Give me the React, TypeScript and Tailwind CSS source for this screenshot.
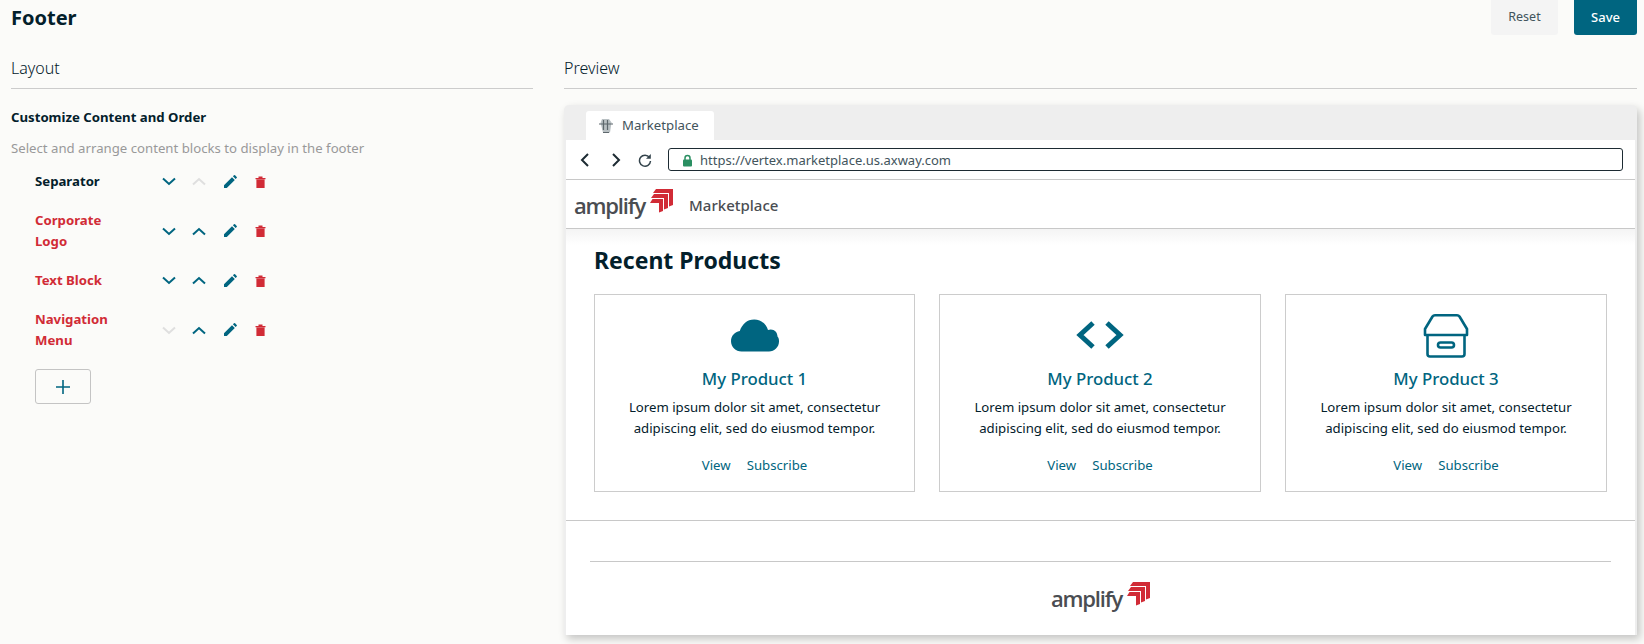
import React from "react";

const Chevron = ({ up, muted }: { up?: boolean; muted?: boolean }) => (
  <svg width="14" height="9" viewBox="0 0 14 9" className={muted ? "text-[#dfdfdf]" : "text-[#006580]"}>
    <path d={up ? "M1 7.5 7 2l6 5.5" : "M1 1.5 7 7l6-5.5"} fill="none" stroke="currentColor" strokeWidth="2" />
  </svg>
);

const Pencil = () => (
  <svg width="14" height="14" viewBox="0 0 14 14" className="text-[#006580]">
    <path d="M1 10.2 9 2.2l2.8 2.8-8 8H1zM9.9 1.3 11 .3a.8.8 0 0 1 1.1 0l1.6 1.6a.8.8 0 0 1 0 1.1l-1.1 1.1z" fill="currentColor" />
  </svg>
);

const Trash = () => (
  <svg width="11" height="12" viewBox="0 0 11 12" className="text-[#d12b36]">
    <path d="M0.5 2h10v1.2H.5zM3.5.4h4V2h-4zM1.4 3.6h8.2V12H1.4z" fill="currentColor" />
  </svg>
);

const Arrows = () => (
  <svg width="23" height="24" viewBox="0 0 23 24" className="shrink-0">
    <path fill="#d12b36" d="M6 0h17v16l-4 1.500V4H3z" />
    <path fill="#d12b36" d="M4 5h14v14l-4 1.500V9H1z" />
    <path fill="#d12b36" d="M2.500 10H13v12l-4 1.500V14H0z" />
  </svg>
);

const Logo = () => (
  <div className="flex items-start gap-[5px]">
    <span className="mt-[1px] text-[22px] leading-[30px] font-semibold tracking-[-1.2px] text-[#4a4d52] [font-family:'Open_Sans',sans-serif]">
      amplify
    </span>
    <Arrows />
  </div>
);

const Row = ({ name, error, first, last }: { name: string; error?: boolean; first?: boolean; last?: boolean }) => (
  <div className="flex items-center">
    <div className={`w-[92px] text-[13.2px] leading-[21px] font-bold ${error ? "text-[#d12b36]" : "text-[#03202b]"}`}>{name}</div>
    <div className="ml-[27px] flex items-center">
      <div className="flex w-[30px] justify-center"><Chevron muted={last} /></div>
      <div className="flex w-[30px] justify-center"><Chevron up muted={first} /></div>
      <div className="flex w-[31px] justify-center"><Pencil /></div>
      <div className="flex w-[30px] justify-center"><Trash /></div>
    </div>
  </div>
);

const Card = ({ icon, title, width }: { icon: React.ReactNode; title: string; width: string }) => (
  <div className={`flex h-[198px] flex-col items-center border border-[#cccccc] bg-white ${width}`}>
    <div className="mt-[17px] flex h-[46px] items-center justify-center">{icon}</div>
    <div className="mt-[8px] text-[16.8px] leading-[26px] font-medium text-[#006580]">{title}</div>
    <div className="mt-[5px] text-center text-[13.2px] leading-[21px] text-[#03202b]">
      Lorem ipsum dolor sit amet, consectetur
      <br />
      adipiscing elit, sed do eiusmod tempor.
    </div>
    <div className="mt-[16px] flex gap-4 text-[13.2px] leading-[21px] text-[#006580]">
      <span>View</span>
      <span>Subscribe</span>
    </div>
  </div>
);

const Cloud = () => (
  <svg width="48" height="33" viewBox="0 0 48 32" className="text-[#006580]">
    <path fill="currentColor" d="M10.500 32C4.700 32 0 27.600 0 21.800 0 16.600 3.700 12.300 8.800 11.600 11 4.700 16 0 23.200 0c6.600 0 12 4.400 13.800 10.600.9-.4 1.700-.6 2.700-.6 4.200 0 6.700 3.200 6.800 7 1.500 1.600 1.500 3.200 1.500 5 0 5.500-4.500 10-10 10z" />
  </svg>
);

const Code = () => (
  <svg width="48" height="30" viewBox="0 0 48 28" className="text-[#006580]">
    <path fill="none" stroke="currentColor" strokeWidth="5" d="M17 2 4 14l13 12M31 2l13 12-13 12" />
  </svg>
);

const Box = () => (
  <svg width="46" height="45" viewBox="0 0 46 45" className="text-[#006580]">
    <g fill="none" stroke="currentColor" strokeWidth="2.600" strokeLinejoin="round">
      <path d="M2 16 9.500 3.500a3 3 0 0 1 2.500-1.300h22a3 3 0 0 1 2.500 1.300L44 16v6H2z" />
      <path d="M4.500 22v19a2.500 2.500 0 0 0 2.500 2.500h32a2.500 2.500 0 0 0 2.500-2.500V22" />
      <rect x="15" y="29.500" width="16" height="5" rx="2.500" />
    </g>
  </svg>
);

export default function App() {
  return (
    <div className="h-[644px] overflow-hidden bg-[#fbfbf9] pr-[7px] pl-[11px] [font-family:'Noto_Sans',sans-serif]">
      <div className="flex h-[35px] items-center justify-between">
        <h1 className="text-xl leading-[35px] font-bold text-[#03202b]">Footer</h1>
        <div className="flex h-[35px] gap-4 self-start">
          <button className="w-[67px] rounded-b-[3px] bg-[#f4f4f4] text-[12.5px] text-[#42545c]">Reset</button>
          <button className="w-[63px] rounded-b-[3px] bg-[#006580] text-[13px] font-medium text-white">Save</button>
        </div>
      </div>
      <div className="mt-[21px] flex gap-[31px]">
        <div className="w-[522px] shrink-0">
          <div className="h-[33px] border-b border-[#cccccc] text-base leading-[24px] font-light text-[#03202b]">Layout</div>
          <div className="mt-[18px] text-[13.2px] leading-[20px] font-bold text-[#03202b]">Customize Content and Order</div>
          <div className="mt-[11px] text-[13.2px] leading-[20px] text-[#999999]">Select and arrange content blocks to display in the footer</div>
          <div className="mt-[13px] flex flex-col gap-[18px] pl-[24px]">
            <Row name="Separator" first />
            <Row name="Corporate Logo" error />
            <Row name="Text Block" error />
            <Row name="Navigation Menu" error last />
            <button className="flex h-[35px] w-[56px] items-center justify-center rounded-[3px] border border-[#c4c4c4]">
              <svg width="16" height="16" viewBox="0 0 16 16" className="text-[#006580]">
                <path d="M8 1v14M1 8h14" stroke="currentColor" strokeWidth="1.600" fill="none" />
              </svg>
            </button>
          </div>
        </div>
        <div className="min-w-0 flex-1">
          <div className="h-[33px] border-b border-[#cccccc] text-base leading-[24px] font-light text-[#03202b]">Preview</div>
          <div className="mt-[16px] h-[530px] rounded-t-[5px] bg-[#eeeeee] px-[2px] shadow-[3px_4px_8px_rgba(0,0,0,0.22)]">
            <div className="flex h-[35px] items-end pl-[20px]">
              <div className="flex h-[29px] w-[128px] items-center gap-[8px] rounded-t-[3px] bg-white pt-[1px] pl-[12px] text-[13.2px] text-[#42545c]">
                <svg width="16" height="18" viewBox="0 0 16 18">
                  <path d="M4 2h7l2.500 3.500-1.500 10H5L2.500 6z" fill="#b9c0c3" />
                  <path d="M5.500 3v10M9.500 3v10M1 7h14M5 15.500h6" stroke="#5d676c" strokeWidth="1.200" fill="none" />
                </svg>
                <span>Marketplace</span>
              </div>
            </div>
            <div className="h-[495px] bg-white">
              <div className="flex h-[40px] items-center border-b border-[#c8c8c8] pl-[13px]">
                <svg width="12" height="16" viewBox="0 0 12 16" className="text-[#1d2b33]">
                  <path d="M9 2 3 8l6 6" fill="none" stroke="currentColor" strokeWidth="2" />
                </svg>
                <svg width="12" height="16" viewBox="0 0 12 16" className="ml-[19px] text-[#1d2b33]">
                  <path d="m3 2 6 6-6 6" fill="none" stroke="currentColor" strokeWidth="2" />
                </svg>
                <svg width="14" height="14" viewBox="0 0 14 14" className="ml-[16px] text-[#33434b]">
                  <path d="M11.500 4.500A5.500 5.500 0 1 0 12.500 8" fill="none" stroke="currentColor" strokeWidth="1.500" />
                  <path d="M12.800 1v4.700H8z" fill="currentColor" />
                </svg>
                <div className="ml-[16px] flex h-[23px] w-[955px] items-center rounded-[3px] border border-[#1d2b33] pt-[2px] pl-[13px] text-[13px] text-[#42545c]">
                  <svg width="11" height="13" viewBox="0 0 11 13" className="mr-[7px]">
                    <path d="M3 6V4a2.500 2.500 0 0 1 5 0v2" fill="none" stroke="#2a8f62" strokeWidth="1.500" />
                    <rect x="1" y="5.500" width="9" height="7" rx="1" fill="#2a8f62" />
                  </svg>
                  https://vertex.marketplace.us.axway.com
                </div>
              </div>
              <div className="flex h-[49px] items-center border-b border-[#c8c8c8] pl-[8px]">
                <Logo />
                <span className="mt-[2px] ml-[16px] text-[15px] font-medium text-[#4a4d52]">Marketplace</span>
              </div>
              <div className="h-[291px] bg-gradient-to-b from-[#f4f4f4] to-white to-[16px] px-[28px]">
                <div className="pt-[13px] text-[23px] leading-[36px] font-bold text-[#03202b]">Recent Products</div>
                <div className="mt-[16px] flex gap-[24px]">
                  <Card icon={<Cloud />} title="My Product 1" width="w-[321px]" />
                  <Card icon={<Code />} title="My Product 2" width="w-[322px]" />
                  <Card icon={<Box />} title="My Product 3" width="w-[322px]" />
                </div>
              </div>
              <div className="border-t border-[#c8c8c8] px-[24px] pt-[40px]">
                <div className="flex justify-center border-t border-[#c8c8c8] pt-[20px]">
                  <Logo />
                </div>
              </div>
            </div>
          </div>
        </div>
      </div>
    </div>
  );
}
